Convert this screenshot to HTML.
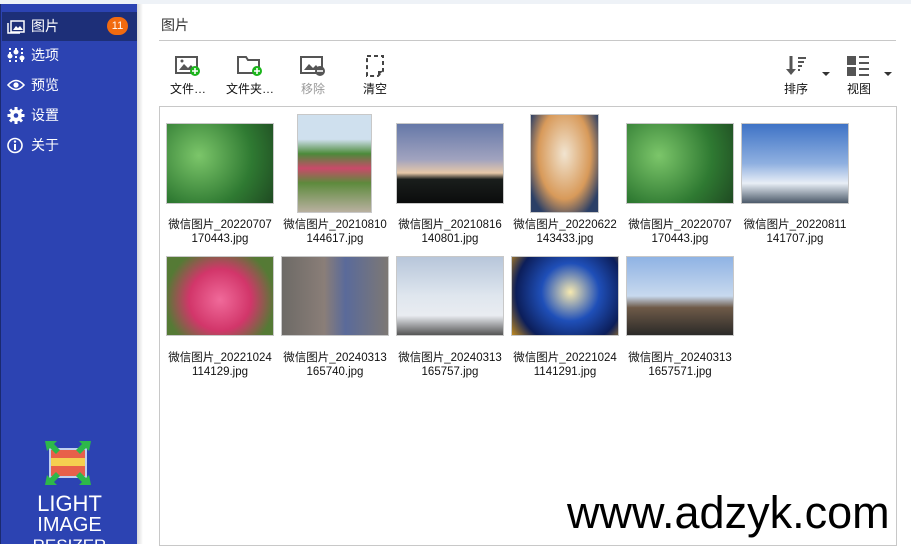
<!DOCTYPE html>
<html><head><meta charset="utf-8"><style>
*{margin:0;padding:0;box-sizing:border-box}
body{width:911px;height:544px;overflow:hidden;background:#fff;font-family:"Liberation Sans","Noto Sans CJK SC",sans-serif;position:relative}
.top{position:absolute;left:0;top:0;width:911px;height:4px;background:#eef2f7}
.side{position:absolute;left:0;top:4px;width:137px;height:540px;background:#2c43b2;border-left:1px solid #1b2a70}
.shadow{position:absolute;left:137px;top:4px;width:6px;height:540px;background:linear-gradient(90deg,#d8d8d8,#fff)}
.item{position:absolute;left:1px;width:135px;height:29px;color:#fff;font-size:14px;line-height:29px;padding-left:29px}
.item.sel{background:#1d2f78}
.item svg{position:absolute;left:5px;top:6px}
.badge{position:absolute;left:105px;top:5px;width:21px;height:18px;border-radius:9px;background:#f26a10;color:#fff;font-size:11px;line-height:18px;text-align:center}
.logo{position:absolute;left:0;width:137px;text-align:center;color:#fff;font-size:22px;line-height:22px;letter-spacing:0}
h1{position:absolute;left:161px;top:15px;font-size:14px;font-weight:normal;color:#333}
.hr{position:absolute;left:159px;top:40px;width:737px;height:1px;background:#c8c8c8}
.tb{position:absolute;top:55px;text-align:center;font-size:12px;color:#111;width:60px}
.tb svg{display:block;margin:0 auto 3px}
.box{position:absolute;left:159px;top:106px;width:738px;height:440px;border:1px solid #c8c8c8}
.im{position:absolute;border:1px solid #c8c8c8}
.cap{position:absolute;width:118px;text-align:center;font-size:11.5px;line-height:13.5px;color:#111}
.wm{position:absolute;left:567px;top:487px;font-size:45px;color:#000;font-family:"Liberation Sans",sans-serif}
</style></head><body>
<div class="top"></div>
<div class="side">
<div class="item sel" style="top:8px"><svg width="18" height="16"><rect x="4" y="3" width="13" height="11" fill="none" stroke="#fff" stroke-width="1.5"/><path d="M1 5v10h12" fill="none" stroke="#fff" stroke-width="1.5"/><path d="M6 12l3-4 2 2 2-2 3 4z" fill="#fff"/></svg>图片<span class="badge">11</span></div>
<div class="item" style="top:37px"><svg width="18" height="17"><g stroke="#fff" stroke-width="2" stroke-dasharray="2 2"><path d="M3 1v15M9 1v15M15 1v15"/></g><g fill="#fff"><circle cx="3" cy="9" r="2.5"/><circle cx="9" cy="5" r="2.5"/><circle cx="15" cy="11" r="2.5"/></g></svg>选项</div>
<div class="item" style="top:67px"><svg width="18" height="16"><path d="M1 8q8-9 16 0q-8 9-16 0z" fill="none" stroke="#fff" stroke-width="1.6"/><circle cx="9" cy="8" r="2.6" fill="#fff"/></svg>预览</div>
<div class="item" style="top:97px"><svg width="18" height="17"><circle cx="9" cy="8.5" r="6" fill="#fff"/><g stroke="#fff" stroke-width="3"><path d="M9 0v17M0.5 8.5h17M3 2.5l12 12M15 2.5l-12 12"/></g><circle cx="9" cy="8.5" r="2.3" fill="#2c43b2"/></svg>设置</div>
<div class="item" style="top:127px"><svg width="18" height="17"><circle cx="8" cy="8.5" r="7" fill="none" stroke="#fff" stroke-width="1.6"/><path d="M8 7v6" stroke="#fff" stroke-width="2"/><circle cx="8" cy="4.6" r="1.2" fill="#fff"/></svg>关于</div>
<svg style="position:absolute;left:44px;top:437px" width="46" height="44"><rect x="4" y="7" width="38" height="30" fill="#c0d0f0"/><rect x="6" y="9" width="34" height="26" fill="#e8604a"/><rect x="6" y="17" width="34" height="8" fill="#f5d050"/><g fill="#2db84a"><path d="M0 0h12l-3 3 6 6-4 4-6-6-3 3z"/><path d="M46 0h-12l3 3-6 6 4 4 6-6 3 3z"/><path d="M0 44h12l-3-3 6-6-4-4-6 6-3-3z"/><path d="M46 44h-12l3-3-6-6 4-4 6 6 3-3z"/></g></svg>
<div class="logo" style="top:489px">LIGHT</div>
<div class="logo" style="top:510px;font-size:20px">IMAGE</div>
<div class="logo" style="top:531px;font-size:17px">RESIZER</div>
</div>
<div class="shadow"></div>
<h1>图片</h1>
<div class="hr"></div>
<div class="tb" style="left:158px"><svg width="26" height="22"><rect x="1" y="2" width="21" height="16" fill="none" stroke="#555" stroke-width="2"/><path d="M4 15l5-6 4 4 3-3 4 5z" fill="#555"/><circle cx="7" cy="6" r="1.5" fill="#555"/><circle cx="20" cy="16" r="5" fill="#1bb51b"/><path d="M20 13v6M17 16h6" stroke="#fff" stroke-width="1.6"/></svg>文件…</div>
<div class="tb" style="left:220px"><svg width="26" height="22"><path d="M1 2h8l2 3h11v13H1z" fill="none" stroke="#555" stroke-width="2"/><circle cx="20" cy="16" r="5" fill="#1bb51b"/><path d="M20 13v6M17 16h6" stroke="#fff" stroke-width="1.6"/></svg>文件夹…</div>
<div class="tb" style="left:283px;color:#999"><svg width="26" height="22"><rect x="1" y="2" width="21" height="16" fill="none" stroke="#555" stroke-width="2"/><path d="M4 15l5-6 4 4 3-3 4 5z" fill="#555"/><circle cx="20" cy="16" r="5" fill="#555"/><path d="M17 16h6" stroke="#fff" stroke-width="1.6"/></svg>移除</div>
<div class="tb" style="left:345px"><svg width="26" height="22"><path d="M5 1h16v15l-5 5H5z" fill="none" stroke="#444" stroke-width="2" stroke-dasharray="4 3"/><path d="M16 21v-5h5" fill="#444"/></svg>清空</div>
<div class="tb" style="left:766px"><svg width="26" height="22"><path d="M8 1v15" stroke="#555" stroke-width="3"/><path d="M3 14h10l-5 6z" fill="#555"/><g stroke="#555" stroke-width="2"><path d="M15 3h8M15 7h6M15 11h4M15 15h2"/></g></svg>排序</div>
<div style="position:absolute;left:822px;top:72px;border:4px solid transparent;border-top:4px solid #333;border-bottom:0"></div>
<div class="tb" style="left:829px"><svg width="26" height="22"><rect x="1" y="1" width="9" height="9" fill="#555"/><rect x="1" y="12" width="9" height="9" fill="#555"/><g stroke="#555" stroke-width="2"><path d="M13 2h10M13 8h10M13 14h10M13 20h10"/></g></svg>视图</div>
<div style="position:absolute;left:884px;top:72px;border:4px solid transparent;border-top:4px solid #333;border-bottom:0"></div>
<div class="box"></div>
<div class="im" style="left:166px;top:123px;width:108px;height:81px;background:radial-gradient(circle at 30% 40%,#7cc66a,#2f7a32 60%,#1f4a22)"></div>
<div class="im" style="left:297px;top:114px;width:75px;height:99px;background:linear-gradient(180deg,#cfe0ee 0,#cfe0ee 25%,#4c8a3a 40%,#c94a6a 55%,#5d8a3c 70%,#b9b0a0 100%)"></div>
<div class="im" style="left:396px;top:123px;width:108px;height:81px;background:linear-gradient(180deg,#6578a8,#a1a3bf 45%,#e6c8a8 62%,#1a1e1c 70%,#0b0c0c)"></div>
<div class="im" style="left:530px;top:114px;width:69px;height:99px;background:radial-gradient(ellipse at 50% 40%,#f1e4d0,#d89a5a 55%,#2b3f66 85%)"></div>
<div class="im" style="left:626px;top:123px;width:108px;height:81px;background:radial-gradient(circle at 30% 40%,#7cc66a,#2f7a32 60%,#1f4a22)"></div>
<div class="im" style="left:741px;top:123px;width:108px;height:81px;background:linear-gradient(180deg,#3f73c6,#8fb0e0 50%,#e8eef6 75%,#4c5a6a)"></div>
<div class="im" style="left:166px;top:256px;width:108px;height:80px;background:radial-gradient(circle at 50% 55%,#f06a9a,#d2366a 45%,#557a35 80%)"></div>
<div class="im" style="left:281px;top:256px;width:108px;height:80px;background:linear-gradient(90deg,#6d6a66,#8a7e78 40%,#5a6a9a 60%,#7d7874)"></div>
<div class="im" style="left:396px;top:256px;width:108px;height:80px;background:linear-gradient(180deg,#b7c6da,#dfe6ee 50%,#e9ecf1 75%,#555 100%)"></div>
<div class="im" style="left:511px;top:256px;width:108px;height:80px;background:radial-gradient(circle at 55% 45%,#f6e9b0,#1f4fb8 40%,#0c1e5a 75%,#c08a20)"></div>
<div class="im" style="left:626px;top:256px;width:108px;height:80px;background:linear-gradient(180deg,#8fb3e4,#c8d9ee 50%,#6e5a48 65%,#2b2a28)"></div>
<div class="cap" style="left:161px;top:219px">微信图片_20220707<br>170443.jpg</div>
<div class="cap" style="left:276px;top:219px">微信图片_20210810<br>144617.jpg</div>
<div class="cap" style="left:391px;top:219px">微信图片_20210816<br>140801.jpg</div>
<div class="cap" style="left:506px;top:219px">微信图片_20220622<br>143433.jpg</div>
<div class="cap" style="left:621px;top:219px">微信图片_20220707<br>170443.jpg</div>
<div class="cap" style="left:736px;top:219px">微信图片_20220811<br>141707.jpg</div>
<div class="cap" style="left:161px;top:352px">微信图片_20221024<br>114129.jpg</div>
<div class="cap" style="left:276px;top:352px">微信图片_20240313<br>165740.jpg</div>
<div class="cap" style="left:391px;top:352px">微信图片_20240313<br>165757.jpg</div>
<div class="cap" style="left:506px;top:352px">微信图片_20221024<br>1141291.jpg</div>
<div class="cap" style="left:621px;top:352px">微信图片_20240313<br>1657571.jpg</div>
<div class="wm">www.adzyk.com</div>
</body></html>
